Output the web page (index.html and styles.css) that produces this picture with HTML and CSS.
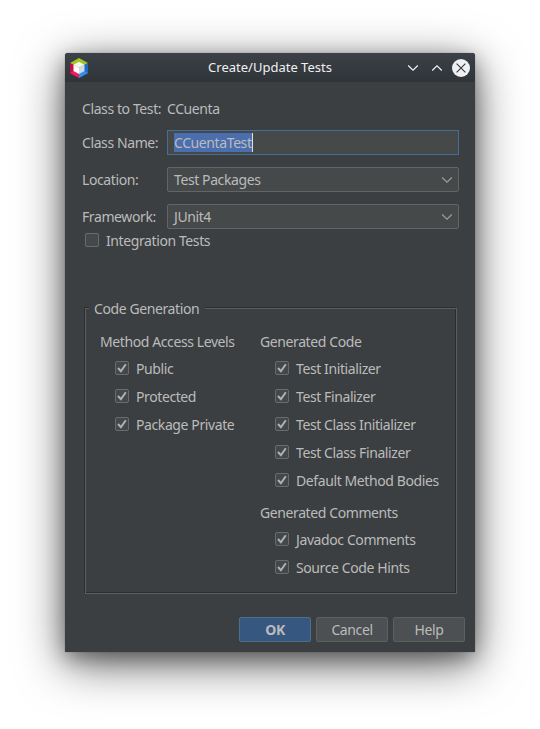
FILE: index.html
```
<!DOCTYPE html>
<html lang="en">
<head>
<meta charset="utf-8">
<title>Create/Update Tests</title>
<link rel="stylesheet" href="styles.css">
</head>
<body>
<svg class="defs" width="0" height="0" aria-hidden="true">
  <symbol id="tick" viewBox="1 1 12 12"><path d="M3 7 5.9 10.2 10.8 3.2" fill="none" stroke="#b0b2b3" stroke-width="2"/></symbol>
  <symbol id="chevron" viewBox="0 0 12 8"><path d="M1.2 1.5 6 6.2 10.8 1.5" fill="none" stroke="currentColor" stroke-width="1.2"/></symbol>
</svg>
<main class="window">
  <header class="titlebar">
    <svg class="logo" width="18" height="20" viewBox="0 0 18 20">
      <path d="M9 0 18 5 9 10 0 5Z" fill="#a4c520"/>
      <path d="M0 5 9 10V20L0 15Z" fill="#c80b49"/>
      <path d="M0 15 4 12.5 9 15V20Z" fill="#ee1c5c"/>
      <path d="M18 5 9 10V20L18 15Z" fill="#1b6ac6"/>
      <path d="M18 15 14 12.5 9 15V20Z" fill="#2e90e8"/>
      <path d="M9 3.8 14.5 6.7 9 9.5 3.5 6.7Z" fill="#f3f6e8"/>
      <path d="M3.5 6.7 9 9.5V16L3.5 13Z" fill="#fff"/>
      <path d="M14.5 6.7 9 9.5V16L14.5 13Z" fill="#cfdbe4"/>
    </svg>
    <h1 class="title">Create/Update Tests</h1>
    <div class="controls">
      <svg width="12" height="8"><use href="#chevron"/></svg>
      <svg class="up" width="12" height="8"><use href="#chevron"/></svg>
      <svg class="close" width="18" height="18" viewBox="0 0 18 18"><circle cx="9" cy="9" r="9" fill="#eff0f1"/><path d="m4.6 4.6 8.8 8.8m0-8.8-8.8 8.8" stroke="#31363b" stroke-width="1.1"/></svg>
    </div>
  </header>
  <div class="form">
    <span>Class to Test:</span><span class="value">CCuenta</span>
    <span>Class Name:</span><div class="field focused"><span class="selection">CCuentaTest</span></div>
    <span>Location:</span><div class="field combo">Test Packages<svg width="12" height="8"><use href="#chevron"/></svg></div>
    <span>Framework:</span><div class="field combo">JUnit4<svg width="12" height="8"><use href="#chevron"/></svg></div>
  </div>
  <div class="check integration"><i class="box"></i>Integration Tests</div>
  <section class="group">
    <h2 class="legend">Code Generation</h2>
    <div class="columns">
      <div>
        <h3>Method Access Levels</h3>
        <div class="check"><svg class="box"><use href="#tick"/></svg>Public</div>
        <div class="check"><svg class="box"><use href="#tick"/></svg>Protected</div>
        <div class="check"><svg class="box"><use href="#tick"/></svg>Package Private</div>
      </div>
      <div>
        <h3>Generated Code</h3>
        <div class="check"><svg class="box"><use href="#tick"/></svg>Test Initializer</div>
        <div class="check"><svg class="box"><use href="#tick"/></svg>Test Finalizer</div>
        <div class="check"><svg class="box"><use href="#tick"/></svg>Test Class Initializer</div>
        <div class="check"><svg class="box"><use href="#tick"/></svg>Test Class Finalizer</div>
        <div class="check"><svg class="box"><use href="#tick"/></svg>Default Method Bodies</div>
        <h3 class="comments">Generated Comments</h3>
        <div class="check"><svg class="box"><use href="#tick"/></svg>Javadoc Comments</div>
        <div class="check"><svg class="box"><use href="#tick"/></svg>Source Code Hints</div>
      </div>
    </div>
  </section>
  <footer class="actions">
    <div class="button primary">OK</div>
    <div class="button">Cancel</div>
    <div class="button">Help</div>
  </footer>
</main>
</body>
</html>
```

FILE: styles.css
```
*, ::after { box-sizing: border-box; }
body {
  margin: 0;
  padding: 53px 65px 0;
  height: 729px;
  overflow: hidden;
  background: #fff;
  color: #bbb;
  font: 14px/20px "Noto Sans", sans-serif;
  letter-spacing: -.4px;
  white-space: nowrap;
}
.defs { position: absolute; }
h1, h2, h3 { margin: 0; font: inherit; }
.window {
  display: flex;
  flex-direction: column;
  width: 410px;
  height: 599px;
  border-radius: 3px 3px 0 0;
  background: #3c3f41;
  box-shadow: 0 0 1px rgba(0, 0, 0, .5), 0 12px 48px rgba(0, 0, 0, .6), 0 6px 20px rgba(0, 0, 0, .35);
}
.titlebar {
  display: grid;
  grid-template-columns: 70px 1fr 70px;
  align-items: center;
  height: 29px;
  flex: none;
  padding: 0 5px;
  border-radius: 3px 3px 0 0;
  background: linear-gradient(#3c4149, #2f3437);
  color: #eff0f1;
}
.title { padding-bottom: 2px; text-align: center; font-size: 13px; letter-spacing: 0; }
.controls { display: flex; align-items: center; justify-content: flex-end; gap: 12px; }
.up { transform: rotate(180deg); }
.close { margin-left: -3px; }
.form {
  display: grid;
  grid-template-columns: 85px 292px;
  grid-template-rows: 20px 25px 25px 25px;
  row-gap: 11px;
  align-items: center;
  padding: 17px 16px 0 17px;
  row-gap: 12px;
  margin-bottom: -1px;
}
.form > :nth-child(n+3) { margin-top: -2px; }
.field {
  display: flex;
  align-items: center;
  height: 25px;
  padding: 0 6px;
  border: 1px solid #646464;
  border-radius: 2px;
  background: #45494a;
}
.focused { border-color: #466d94; border-radius: 0; }
.selection {
  height: 19px;
  line-height: 19px;
  border-right: 1px solid #ddd;
  background: #4b6eaf;
}
.combo { justify-content: space-between; padding-right: 5px; }
.combo svg { color: #9b9d9e; }
.check { display: flex; align-items: center; gap: 7px; height: 28px; padding-left: 15px; }
.box {
  width: 14px;
  height: 14px;
  margin-top: -2px;
  border: 1px solid #6b6b6b;
  border-radius: 2px;
  background: #43494a;
}
.integration { height: 24px; padding-left: 20px; }
.group {
  position: relative;
  width: 372px;
  height: 286px;
  margin: 54px 0 0 19px;
  border: 1px solid #2b2d2e;
}
.group::after {
  content: "";
  position: absolute;
  top: 0;
  left: 0;
  width: 372px;
  height: 286px;
  border: 1px solid #5b5e60;
}
.legend {
  position: relative;
  z-index: 1;
  width: 116px;
  margin: -9px 0 0 4px;
  padding-left: 5px;
  background: #3c3f41;
}
.columns { display: grid; grid-template-columns: 160px 1fr; padding: 13px 0 0 15px; }
.columns h3 { margin-bottom: 3px; }
.columns .comments { margin-top: 8px; }
.actions { display: flex; justify-content: flex-end; gap: 5px; margin-top: 24px; padding-right: 10px; }
.button {
  width: 72px;
  height: 25px;
  border: 1px solid #5e6060;
  border-radius: 2px;
  background: #4c5052;
  line-height: 23px;
  text-align: center;
}
.primary { border-color: #4c708c; background: #365880; font-weight: bold; }
```
